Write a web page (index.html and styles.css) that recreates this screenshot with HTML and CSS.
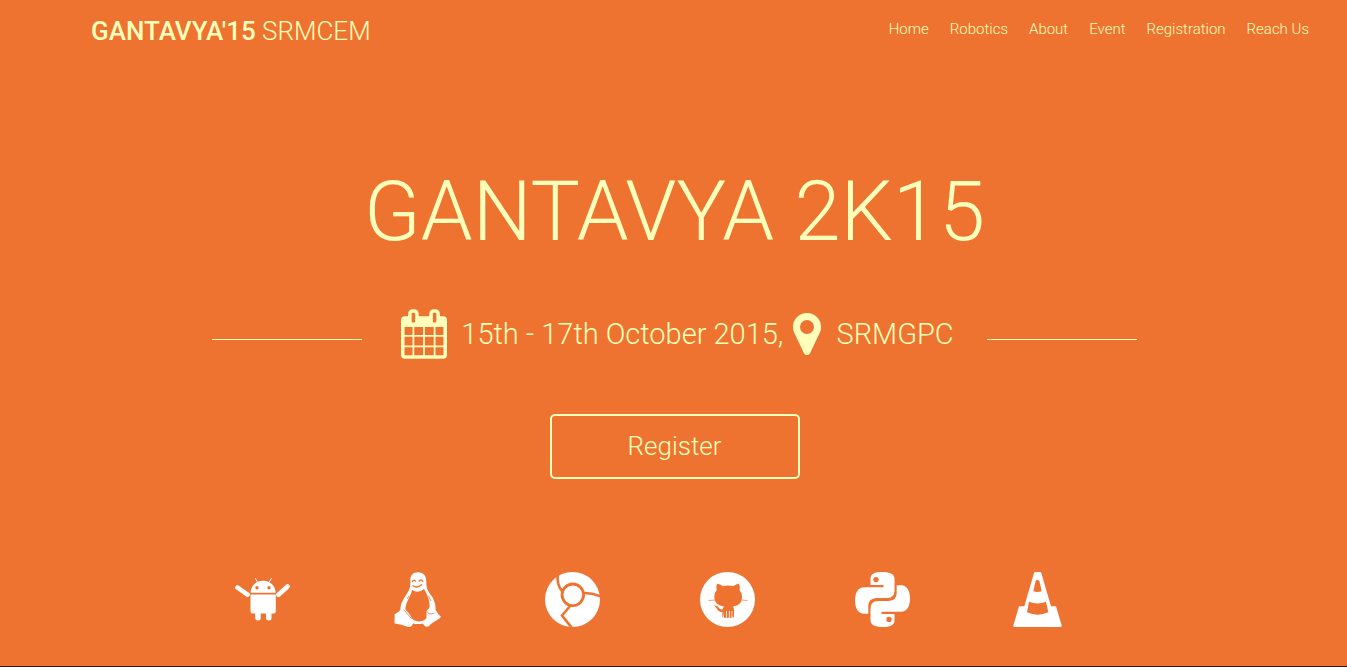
FILE: index.html
```html
<!DOCTYPE html>
<html lang="en">
<head>
<meta charset="utf-8">
<title>Gantavya'15 SRMCEM</title>
<meta name="viewport" content="width=device-width, initial-scale=1">
<link rel="stylesheet" href="styles.css">
</head>
<body>
<header class="topbar">
  <a class="brand" href="#home"><strong>GANTAVYA'15</strong> SRMCEM</a>
  <nav class="menu">
    <a href="#home">Home</a>
    <a href="#robotics">Robotics</a>
    <a href="#about">About</a>
    <a href="#event">Event</a>
    <a href="#registration">Registration</a>
    <a href="#reach">Reach Us</a>
  </nav>
</header>
<main class="hero" id="home">
  <h1 class="title">GANTAVYA 2K15</h1>
  <div class="when">
    <span class="rule"></span>
    <p class="details">
      <svg class="calendar" viewBox="0 0 1664 1792" aria-hidden="true"><path d="M128 1664h288v-288h-288v288zm352 0h320v-288h-320v288zm-352-352h288v-320h-288v320zm352 0h320v-320h-320v320zm-352-384h288v-288h-288v288zm736 736h320v-288h-320v288zm-384-736h320v-288h-320v288zm768 736h288v-288h-288v288zm-384-352h320v-320h-320v320zm-352-864v-288q0-13-9.500-22.500t-22.500-9.500h-64q-13 0-22.500 9.500t-9.500 22.500v288q0 13 9.500 22.500t22.500 9.500h64q13 0 22.500-9.500t9.500-22.500zm736 864h288v-320h-288v320zm-384-384h320v-288h-320v288zm384 0h288v-288h-288v288zm32-480v-288q0-13-9.500-22.500t-22.500-9.500h-64q-13 0-22.500 9.500t-9.500 22.500v288q0 13 9.500 22.500t22.500 9.500h64q13 0 22.500-9.500t9.500-22.500zm384-64v1280q0 52-38 90t-90 38h-1408q-52 0-90-38t-38-90v-1280q0-52 38-90t90-38h128v-96q0-66 47-113t113-47h64q66 0 113 47t47 113v96h384v-96q0-66 47-113t113-47h64q66 0 113 47t47 113v96h128q52 0 90 38t38 90z"/></svg>
      <span class="date">15th - 17th October 2015,</span>
      <svg class="marker" viewBox="0 128 1024 1536" aria-hidden="true"><path d="M768 640q0-106-75-181t-181-75-181 75-75 181 75 181 181 75 181-75 75-181zm256 0q0 109-33 179l-364 774q-16 33-47.500 52t-67.500 19-67.500-19-46.500-52l-365-774q-33-70-33-179 0-212 150-362t362-150 362 150 150 362z"/></svg>
      <span>SRMGPC</span>
    </p>
    <span class="rule"></span>
  </div>
  <a class="register" href="#registration">Register</a>
  <ul class="logos">
    <li><svg viewBox="0 0 55 55" role="img" aria-label="Android">
      <path d="M15.500 20.700C16 13.500 21 8.700 28 8.700S40.300 13.500 40.800 20.700zM15.500 22.500H40.800V39.500Q40.800 41.500 38.800 41.500H36.500V46Q36.500 48.500 33.800 48.500T31 46V41.500H25.700V46Q25.700 48.500 23 48.500T20.200 46V41.500H17.500Q15.500 41.500 15.500 39.500z"/>
      <path class="line" d="M2.500 15.500L12.500 22.700M52.500 14.500L43.500 22.700" stroke-width="4.600"/>
      <path class="line" d="M20.500 6.500L22.700 10.500M36.300 6.500L34 10.500" stroke-width="1"/>
      <circle class="cut" cx="22" cy="15.700" r="1.700"/><circle class="cut" cx="34" cy="15.700" r="1.700"/></svg></li>
    <li><svg viewBox="0 0 55 55" role="img" aria-label="Linux">
      <path d="M20.300 8C20.300 3 23.500.3 28 .3C33.500.3 36.300 4 36.300 9.500C36.300 15 37 18 40.500 22.500C44 27 46 32 45.500 38C47.500 40 47.500 42 50.800 44.500C51 47 43 49.500 39.500 53.500C37 56 33.800 54 33 51.500Q28 52.500 23 51.500C22 55 19.500 55.500 16 54.300C12 52.500 8 52.300 4.800 51.500C3.800 49 5.300 46 4.500 42.500C6 41 9 40.500 10.500 37.500C10.500 31.500 13 28 16 23C19.500 18 20.700 15 20.300 8z"/>
      <path class="cut" d="M22 18Q28 22 34 17C37 22 39.500 27 39.500 33C40.500 36 37.500 37 36.500 39.500V46Q34.500 49 29.500 49.500Q24.500 49.500 22 46.500C20 42 17 39.500 15.500 37.500C15 31.500 20 26 22 18z"/>
      <path class="slit" d="M22.300 10Q23.500 6.500 25.700 9.500M28.800 9.500Q31.300 6 33 10M22.500 13.500Q27 17 32 12.500" stroke-width="1.300"/>
      <path class="slit" d="M13.500 37.500L21.500 46.500M17 27L19 24M37 39.500Q39 43.500 44.500 41M38.500 24L41 29" stroke-width=".8"/></svg></li>
    <li><svg viewBox="0 0 55 55" role="img" aria-label="Chrome">
      <circle cx="27.500" cy="27.500" r="27.500"/>
      <circle class="slit" cx="27.800" cy="22.800" r="10.800" stroke-width="2.800"/>
      <path class="slit" d="M12.500 2C12.500 10 13 15 17.500 19.500M38.500 21Q47 20.800 56 24.500M26 33L17 43.500L27 56" stroke-width="2.600"/></svg></li>
    <li><svg viewBox="0 0 55 55" role="img" aria-label="GitHub">
      <circle cx="27.500" cy="27.500" r="27.500"/>
      <path class="cut" d="M17 11.700Q20.500 12 23 14.200Q28 13 33 14.200Q36 12 39 11.700Q40.500 14.500 39.500 18Q42 20.500 42 24.500C42 31 39 33.500 33 34.500Q34 36 34 38.500V45Q33 46.500 32.300 44.500V39H31.500V45.500Q30.500 46.500 29.700 45.500V39H28.900V45.500Q27.800 46.500 26.800 45.500V39H26V45.500Q25 46.500 24 45.500V39Q23.500 45.500 22.300 45.500V40C18 40 17.500 37.500 16 35.500Q15 34 14 33.500C17 33.300 18 34.500 19 36Q20.500 38 22.700 37.200Q23 35.500 24 34.500C18 33.500 14.300 31 14.300 24.500Q14.300 20.500 16.800 18Q15.800 14.500 17 11.700z"/>
      <path class="slit" d="M8.500 28.500L15 28M41.500 28L47.500 28.500" stroke-width=".7"/></svg></li>
    <li><svg viewBox="0 0 55 55" role="img" aria-label="Python">
      <path id="snake" fill-rule="evenodd" d="M15.500 13V7C15.500 1.500 20 0 27.500 0S39.500 2 39.500 7V18.500Q39.500 26 32 26H21.500Q13.300 26.500 13.300 34V41.800H9C3 41.800 0 36 0 28.500S3 15.200 9 15.200H28.500V13zM21 4.900a2.700 2.700 0 1 0 0 5.400a2.700 2.700 0 1 0 0-5.400z"/>
      <use href="#snake" transform="rotate(180 27.500 27.500)"/></svg></li>
    <li><svg viewBox="0 0 55 55" role="img" aria-label="VLC">
      <path fill-rule="evenodd" d="M24 1Q24.300 0 25.300 0H30Q31 0 31.300 1L41 34.300H46L51.700 53.500Q52 55 50.500 55H4.500Q3 55 3.400 53.500L9 34.300H14.300zM25.700 8.500L23.300 19.300Q27.500 20.800 31.700 19.300L29.300 8.500Q27.500 7.500 25.700 8.500zM19 29.800L17 40.300Q27.700 45 38.300 40.300L36 29.800Q27.500 33 19 29.800z"/></svg></li>
  </ul>
</main>
</body>
</html>
```
FILE: styles.css
```css
:root {
  --orange: #ef7330;
  --cream: #ffffbb;
}

* {
  box-sizing: border-box;
}

body {
  margin: 0;
  min-height: 100vh;
  display: flex;
  flex-direction: column;
  background: var(--orange);
  border-bottom: 1px solid #2b1a10;
  color: var(--cream);
  font-family: Roboto, "Liberation Sans", sans-serif;
  font-weight: 300;
}

a {
  color: inherit;
  text-decoration: none;
}

.topbar {
  display: flex;
  justify-content: space-between;
  align-items: flex-start;
  padding: 12px 38px 0 91px;
}

.brand {
  font-size: 26px;
  line-height: 38px;
}

.brand strong {
  font-weight: 500;
}

.menu {
  display: flex;
  gap: 21px;
  font-size: 15px;
  line-height: 34px;
}

.hero {
  display: flex;
  flex-direction: column;
  align-items: center;
  padding-left: 2px;
}

.title {
  margin: 112px 0 0;
  font-size: 83px;
  line-height: 100px;
  font-weight: 300;
}

.when {
  display: flex;
  align-items: center;
  justify-content: center;
  width: 100%;
  margin-top: 47px;
}

.rule {
  width: 150px;
  height: 1px;
  margin-top: 10px;
  background: var(--cream);
}

.details {
  display: flex;
  align-items: center;
  justify-content: center;
  width: 625px;
  margin: 0;
  padding-left: 6px;
  font-size: 29px;
  line-height: 50px;
}

.calendar {
  width: 46px;
  height: 50px;
  margin-right: 14px;
}

.marker {
  width: 28px;
  height: 42px;
  margin: 0 15px 0 10px;
}

svg {
  fill: currentColor;
}

.register {
  width: 250px;
  margin-top: 55px;
  padding: 10px;
  border: 2px solid var(--cream);
  border-radius: 5px;
  font-size: 26px;
  line-height: 41px;
  text-align: center;
}

.logos {
  display: flex;
  gap: 100px;
  margin: 93px 0 39px;
  padding: 0 49px 0 0;
  list-style: none;
  color: #fff;
}

.logos svg {
  display: block;
  width: 55px;
  height: 55px;
}

.cut {
  fill: var(--orange);
}

.line {
  fill: none;
  stroke: #fff;
  stroke-linecap: round;
}

.slit {
  fill: none;
  stroke: var(--orange);
}
```
